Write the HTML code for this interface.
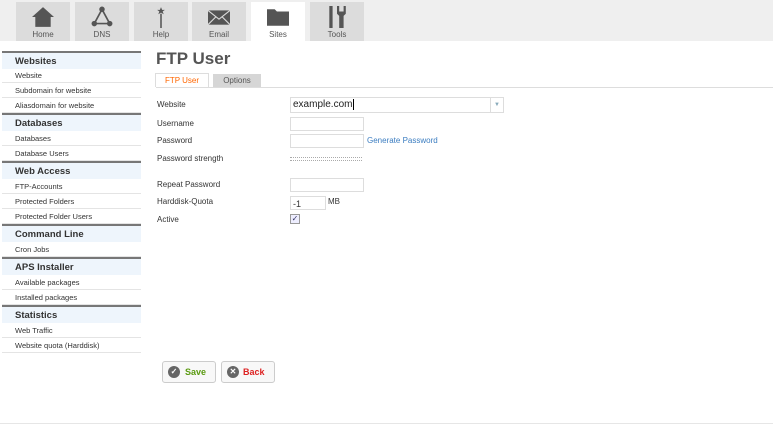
<!DOCTYPE html>
<html><head><style>
body{margin:0;width:773px;height:425px;position:relative;background:#fff;font-family:"Liberation Sans",sans-serif;overflow:hidden;color:#333}
.top{position:absolute;left:0;top:0;width:773px;height:41px;background:#efefef}
.tab{position:absolute;top:2px;width:54px;height:39px;background:#dcdcdc;font-size:8px;color:#555;text-align:center}
.tab span{position:absolute;left:0;right:0;top:28px}
.tab svg{position:absolute;left:15px;top:4px}
.tab.on{background:#fff}
.h{position:absolute;left:2px;width:139px;height:16px;border-top:2px solid #777;background:#eef5fc;font-size:9.5px;font-weight:bold;color:#333;line-height:17px;text-indent:13px}
.i{position:absolute;left:2px;width:139px;height:14px;border-bottom:1px solid #e4e4e4;font-size:7.5px;color:#333;line-height:15px;text-indent:13px}
.l{position:absolute;left:157px;font-size:8px;color:#333}
.in{position:absolute;left:290px;width:72px;height:12px;border:1px solid #ddd;background:#fff}
.btn{position:absolute;top:361px;height:20px;border:1px solid #ccc;border-radius:3px;background:#f8f8f8;font-size:9px;font-weight:bold;line-height:20px}
.btn i{position:absolute;left:5px;top:4px;width:12px;height:12px;border-radius:50%;background:#666;color:#fff;font-style:normal;font-size:8px;line-height:12px;text-align:center}
</style></head><body>
<div class="top"></div>
<div class="tab" style="left:16px"><svg width="24" height="22" viewBox="0 0 20 20"><path d="M10 1L0 10h3v9h14v-9h3z" fill="#555"/></svg><span>Home</span></div>
<div class="tab" style="left:75px"><svg width="24" height="22" viewBox="0 0 20 20"><path d="M10 3L3 16h14z" fill="none" stroke="#555" stroke-width="1.5"/><circle cx="10" cy="3" r="2.5" fill="#555"/><circle cx="3" cy="16" r="2.5" fill="#555"/><circle cx="17" cy="16" r="2.5" fill="#555"/></svg><span>DNS</span></div>
<div class="tab" style="left:134px"><svg width="24" height="22" viewBox="0 0 20 20"><path d="M10 1l1 2.5h2.5l-2 1.5 1 2.5-2.5-1.5-2.5 1.5 1-2.5-2-1.5h2.5z" fill="#555"/><rect x="9.3" y="7" width="1.4" height="13" fill="#555"/></svg><span>Help</span></div>
<div class="tab" style="left:192px"><svg width="24" height="22" viewBox="0 0 20 20"><rect x="0" y="4" width="20" height="13" fill="#555"/><path d="M0 4l10 8 10-8M0 17l7-7M20 17l-7-7" stroke="#dcdcdc" fill="none"/></svg><span>Email</span></div>
<div class="tab on" style="left:251px"><svg width="24" height="22" viewBox="0 0 20 20"><path d="M0 3h7l2 2h11v13H0z" fill="#555"/></svg><span>Sites</span></div>
<div class="tab" style="left:310px"><svg width="24" height="22" viewBox="0 0 20 20"><rect x="3" y="0" width="3" height="20" fill="#555"/><path d="M12 0v5h4V0h2v7l-2 2v11h-4V9l-2-2V0z" fill="#555"/></svg><span>Tools</span></div>

<div class="h" style="top:51px">Websites</div>
<div class="i" style="top:68px">Website</div>
<div class="i" style="top:83px">Subdomain for website</div>
<div class="i" style="top:98px">Aliasdomain for website</div>
<div class="h" style="top:113px">Databases</div>
<div class="i" style="top:131px">Databases</div>
<div class="i" style="top:146px">Database Users</div>
<div class="h" style="top:161px">Web Access</div>
<div class="i" style="top:179px">FTP-Accounts</div>
<div class="i" style="top:194px">Protected Folders</div>
<div class="i" style="top:209px">Protected Folder Users</div>
<div class="h" style="top:224px">Command Line</div>
<div class="i" style="top:242px">Cron Jobs</div>
<div class="h" style="top:257px">APS Installer</div>
<div class="i" style="top:275px">Available packages</div>
<div class="i" style="top:290px">Installed packages</div>
<div class="h" style="top:305px">Statistics</div>
<div class="i" style="top:323px">Web Traffic</div>
<div class="i" style="top:338px">Website quota (Harddisk)</div>

<div style="position:absolute;left:156px;top:49px;font-size:17px;font-weight:bold;color:#555">FTP User</div>
<div style="position:absolute;left:156px;top:87px;width:617px;border-top:1px solid #ddd"></div>
<div style="position:absolute;left:155px;top:73px;width:52px;height:13px;border:1px solid #ddd;border-bottom:none;background:#fff;color:#f60;font-size:8px;text-align:center;line-height:14px">FTP User</div>
<div style="position:absolute;left:213px;top:74px;width:48px;height:13px;background:#d6d6d6;color:#555;font-size:8px;text-align:center;line-height:13px">Options</div>

<div class="l" style="top:100px">Website</div>
<div class="l" style="top:119px">Username</div>
<div class="l" style="top:136px">Password</div>
<div class="l" style="top:154px">Password strength</div>
<div class="l" style="top:180px">Repeat Password</div>
<div class="l" style="top:197px">Harddisk-Quota</div>
<div class="l" style="top:215px">Active</div>

<div class="in" style="top:97px;width:212px;height:14px;font-size:10px;line-height:14px;text-indent:2px;color:#222">example.com<span style="border-left:1px solid #000;margin-left:1px"></span><span style="position:absolute;right:0;top:0;width:12px;height:14px;border-left:1px solid #ddd;color:#8ab;font-size:6px;text-align:center;text-indent:0">▼</span></div>
<div class="in" style="top:117px"></div>
<div class="in" style="top:134px"></div>
<div style="position:absolute;left:367px;top:136px;font-size:8px;color:#3a7cc0">Generate Password</div>
<div style="position:absolute;left:290px;top:157px;width:72px;height:2px;border-top:1px dotted #aaa;border-bottom:1px dotted #aaa"></div>
<div class="in" style="top:178px"></div>
<div class="in" style="top:196px;width:34px;font-size:9px;line-height:14px;text-indent:2px">-1</div>
<div style="position:absolute;left:328px;top:197px;font-size:8px">MB</div>
<div style="position:absolute;left:290px;top:214px;width:8px;height:8px;border:1px solid #999;background:#eef;font-size:8px;line-height:8px;text-align:center;color:#336">✓</div>

<div class="btn" style="left:162px;width:52px"><i>✓</i><span style="margin-left:22px;color:#5a9a10">Save</span></div>
<div class="btn" style="left:221px;width:52px"><i>✕</i><span style="margin-left:21px;color:#d22">Back</span></div>
<div style="position:absolute;left:0;top:423px;width:773px;border-top:1px solid #e6e6e6"></div>
</body></html>
